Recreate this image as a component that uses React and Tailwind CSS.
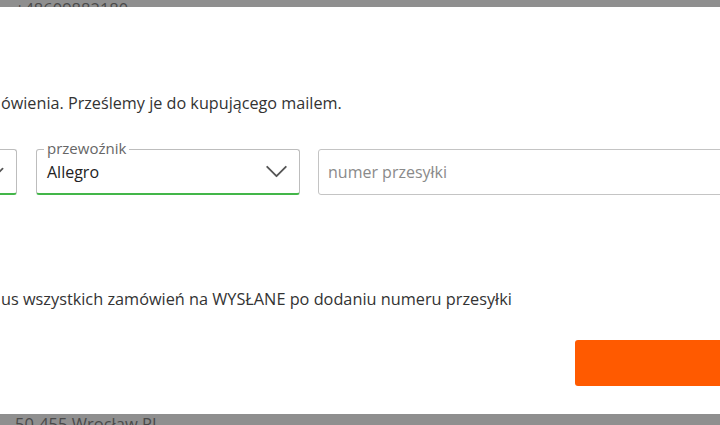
import React from "react";

const font = { fontFamily: '"Open Sans", "Noto Sans", sans-serif' };

function Chevron({ className }) {
  return (
    <svg className={className} viewBox="0 0 24 14" fill="none" stroke="#555" strokeWidth="2" strokeLinecap="round" strokeLinejoin="round">
      <path d="M2 2 L12 12 L22 2" />
    </svg>
  );
}

export default function App() {
  return (
    <div className="w-[720px] h-[425px] overflow-hidden bg-white flex flex-col text-[#333]" style={font}>
      <div className="h-[7px] shrink-0 bg-[#8f8f8f] overflow-hidden">
        <div className="-mt-[2px] pl-[15px] text-[16.5px] leading-[22px] text-[#4a4a4a]">+48609882180</div>
      </div>

      <div className="flex-1 flex flex-col bg-white">
        <p className="mt-[85px] pl-[1px] text-[16.2px] leading-[22px] text-[#333] whitespace-nowrap">
          ówienia. Prześlemy je do kupującego mailem.
        </p>

        <div className="mt-[35px] flex items-start h-[46px]">
          <div className="relative w-[17px] h-[46px] shrink-0 overflow-hidden border-y border-r border-[#bdbdbd] border-b-2 border-b-[#43b649] rounded-r-[3px]">
            <Chevron className="absolute -left-[17px] top-[17px] w-[22px] h-[12px]" />
          </div>

          <div className="relative ml-[19px] w-[264px] h-[46px] shrink-0 border border-[#bdbdbd] border-b-2 border-b-[#43b649] rounded-[3px] flex items-center pl-[10px] pr-[11px]">
            <span className="absolute left-[7px] -top-[12px] bg-white px-[3px] text-[15px] leading-[20px] text-[#666]">przewoźnik</span>
            <span className="flex-1 text-[16px] leading-[22px] text-[#222] mt-[1px]">Allegro</span>
            <Chevron className="w-[23px] h-[13px]" />
          </div>

          <div className="ml-[18px] flex-1 h-[46px] -mr-[20px] border border-[#c4c4c4] rounded-[3px] flex items-center pl-[9px]">
            <span className="text-[16px] leading-[22px] text-[#8a8a8a]">numer przesyłki</span>
          </div>
        </div>

        <p className="mt-[93px] pl-[1px] text-[16.3px] leading-[22px] text-[#333] whitespace-nowrap">
          us wszystkich zamówień na WYSŁANE po dodaniu numeru przesyłki
        </p>

        <div className="mt-[30px] flex justify-end">
          <div className="w-[145px] h-[46px] bg-[#ff5a00] rounded-l-[3px]"></div>
        </div>
      </div>

      <div className="h-[11px] shrink-0 bg-[#8f8f8f] overflow-hidden">
        <div className="-mt-[1px] pl-[15px] text-[16.5px] leading-[22px] text-[#4a4a4a]">50-455 Wrocław PL</div>
      </div>
    </div>
  );
}
